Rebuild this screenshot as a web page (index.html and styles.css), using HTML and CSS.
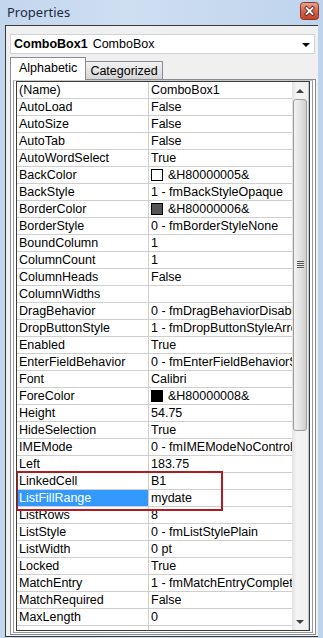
FILE: index.html
```html
<!DOCTYPE html>
<html lang="en">
<head>
    <meta charset="UTF-8">
    <title>Properties</title>
    <link rel="stylesheet" href="styles.css">
</head>
<body>
    <div class="titlebar">
        <span class="title">Properties</span>
        <span class="close">
            <svg width="19" height="18" viewBox="0 0 19 18">
                <defs>
                    <linearGradient id="cg" x1="0" y1="0" x2="0" y2="1">
                        <stop offset="0" stop-color="#eaa591"/>
                        <stop offset="0.5" stop-color="#d7644b"/>
                        <stop offset="1" stop-color="#c2432b"/>
                    </linearGradient>
                </defs>
                <rect x="0.5" y="0.5" width="18" height="17" rx="3" fill="url(#cg)" stroke="#8c3322"/>
                <path d="M6.5 6 L12.5 12 M12.5 6 L6.5 12" stroke="#5a1e14" stroke-width="3.4" stroke-linecap="square"/>
                <path d="M6.5 6 L12.5 12 M12.5 6 L6.5 12" stroke="#ffffff" stroke-width="1.8" stroke-linecap="square"/>
            </svg>
        </span>
    </div>

    <div class="panel">
        <div class="combo">
            <span class="combo-name">ComboBox1</span>
            <span class="combo-type">ComboBox</span>
            <span class="combo-arrow"></span>
        </div>

        <div class="tabs">
            <div class="tab active">Alphabetic</div>
            <div class="tab">Categorized</div>
        </div>

        <div class="tab-page">
            <div class="grid">
                <div class="grid-inner">
                    <div class="rows">
                        <div class="row"><div class="name">(Name)</div><div class="value">ComboBox1</div></div>
                        <div class="row"><div class="name">AutoLoad</div><div class="value">False</div></div>
                        <div class="row"><div class="name">AutoSize</div><div class="value">False</div></div>
                        <div class="row"><div class="name">AutoTab</div><div class="value">False</div></div>
                        <div class="row"><div class="name">AutoWordSelect</div><div class="value">True</div></div>
                        <div class="row"><div class="name">BackColor</div><div class="value"><span class="swatch swatch-white"></span>&amp;H80000005&amp;</div></div>
                        <div class="row"><div class="name">BackStyle</div><div class="value">1 - fmBackStyleOpaque</div></div>
                        <div class="row"><div class="name">BorderColor</div><div class="value"><span class="swatch swatch-gray"></span>&amp;H80000006&amp;</div></div>
                        <div class="row"><div class="name">BorderStyle</div><div class="value">0 - fmBorderStyleNone</div></div>
                        <div class="row"><div class="name">BoundColumn</div><div class="value">1</div></div>
                        <div class="row"><div class="name">ColumnCount</div><div class="value">1</div></div>
                        <div class="row"><div class="name">ColumnHeads</div><div class="value">False</div></div>
                        <div class="row"><div class="name">ColumnWidths</div><div class="value"></div></div>
                        <div class="row"><div class="name">DragBehavior</div><div class="value">0 - fmDragBehaviorDisable</div></div>
                        <div class="row"><div class="name">DropButtonStyle</div><div class="value">1 - fmDropButtonStyleArro</div></div>
                        <div class="row"><div class="name">Enabled</div><div class="value">True</div></div>
                        <div class="row"><div class="name">EnterFieldBehavior</div><div class="value">0 - fmEnterFieldBehaviorSe</div></div>
                        <div class="row"><div class="name">Font</div><div class="value">Calibri</div></div>
                        <div class="row"><div class="name">ForeColor</div><div class="value"><span class="swatch swatch-black"></span>&amp;H80000008&amp;</div></div>
                        <div class="row"><div class="name">Height</div><div class="value">54.75</div></div>
                        <div class="row"><div class="name">HideSelection</div><div class="value">True</div></div>
                        <div class="row"><div class="name">IMEMode</div><div class="value">0 - fmIMEModeNoControl</div></div>
                        <div class="row"><div class="name">Left</div><div class="value">183.75</div></div>
                        <div class="row"><div class="name">LinkedCell</div><div class="value">B1</div></div>
                        <div class="row"><div class="name selected">ListFillRange</div><div class="value">mydate</div></div>
                        <div class="row"><div class="name">ListRows</div><div class="value">8</div></div>
                        <div class="row"><div class="name">ListStyle</div><div class="value">0 - fmListStylePlain</div></div>
                        <div class="row"><div class="name">ListWidth</div><div class="value">0 pt</div></div>
                        <div class="row"><div class="name">Locked</div><div class="value">True</div></div>
                        <div class="row"><div class="name">MatchEntry</div><div class="value">1 - fmMatchEntryComplete</div></div>
                        <div class="row"><div class="name">MatchRequired</div><div class="value">False</div></div>
                        <div class="row"><div class="name">MaxLength</div><div class="value">0</div></div>
                        <div class="row"><div class="name"></div><div class="value"></div></div>

                        <!-- red frame around the linked rows -->
                        <div class="mark"></div>
                    </div>

                    <div class="scrollbar">
                        <div class="sb-btn"><span class="arrow-up"></span></div>
                        <div class="sb-track">
                            <div class="sb-thumb"><span class="grip"></span></div>
                        </div>
                        <div class="sb-btn"><span class="arrow-down"></span></div>
                    </div>
                </div>
            </div>
        </div>
    </div>
</body>
</html>
```

FILE: styles.css
```css
* {
    box-sizing: border-box;
}
html, body {
    margin: 0;
    width: 323px;
    height: 638px;
    overflow: hidden;
}
body {
    font-family: "Liberation Sans", Arial, sans-serif;
    font-size: 12.5px;
    color: #000;
    background: linear-gradient(90deg, #c2d6ee, #cfdff2 40%, #bed3ec);
    display: flex;
    flex-direction: column;
}
.titlebar {
    height: 25px;
    display: flex;
    align-items: center;
    justify-content: space-between;
    padding: 0 4px 0 7px;
}
.title {
    font-family: "Noto Sans", "Liberation Sans", sans-serif;
    font-size: 13px;
    color: #1c2b40;
    margin-top: -2px;
}
.close {
    display: flex;
    margin-top: -3px;
}
.panel {
    height: 612px;
    margin-left: 5px;
    margin-right: 5px;
    background: #f0f0f0;
    border: 1px solid #3a3a3a;
    border-right: none;
    padding: 8px 2px 1px 4px;
    display: flex;
    flex-direction: column;
    min-width: 0;
}
.combo {
    height: 20px;
    margin-right: 1px;
    background: #fff;
    border: 1px solid #d0d3d9;
    display: flex;
    align-items: center;
    padding-left: 3px;
    position: relative;
}
.combo-name {
    font-weight: bold;
    margin-right: 5px;
}
.combo-arrow {
    position: absolute;
    right: 4px;
    top: 8px;
    border-left: 4px solid transparent;
    border-right: 4px solid transparent;
    border-top: 4px solid #000;
}
.tabs {
    margin-top: 3px;
    height: 22px;
    display: flex;
    align-items: flex-end;
}
.tab {
    height: 18px;
    padding: 0 4px;
    border: 1px solid #898c95;
    border-bottom: none;
    background: linear-gradient(#f2f2f2, #d6d6d6);
    display: flex;
    align-items: center;
}
.tab.active {
    height: 23px;
    margin-bottom: -1px;
    padding: 0 8px 2px 8px;
    background: #fff;
    position: relative;
    z-index: 1;
    margin-right: -1px;
}
.tab-page {
    flex: 1;
    background: #fff;
    border: 1px solid #898c95;
    padding: 0 2px 1px 2px;
    display: flex;
    min-height: 0;
    min-width: 0;
}
.grid {
    flex: 1;
    border: 1px solid #9a9a9a;
    border-top-color: #c8c8c8;
    padding: 0 2px 1px 2px;
    display: flex;
    min-height: 0;
    min-width: 0;
}
.grid-inner {
    flex: 1;
    border: 1px solid #3c3c3c;
    display: flex;
    overflow: hidden;
    min-width: 0;
}
.rows {
    flex: 1;
    position: relative;
    overflow: hidden;
    min-width: 0;
}
.row {
    height: 17px;
    display: flex;
    border-bottom: 1px solid #cfcfcf;
}
.name {
    width: 132px;
    flex: none;
    padding-left: 2px;
    border-right: 1px solid #cfcfcf;
    line-height: 16px;
    white-space: nowrap;
    overflow: hidden;
}
.name.selected {
    background: #3399ff;
    color: #fff;
}
.value {
    flex: 1;
    min-width: 0;
    padding-left: 2px;
    line-height: 16px;
    white-space: nowrap;
    overflow: hidden;
    display: flex;
    align-items: center;
}
.swatch {
    width: 12px;
    height: 12px;
    border: 1px solid #000;
    margin-right: 5px;
    flex: none;
}
.swatch-white {
    background: #fff;
}
.swatch-gray {
    background: #555;
}
.swatch-black {
    background: #000;
}
.mark {
    position: absolute;
    left: -1px;
    top: 389px;
    width: 207px;
    height: 40px;
    border: 2px solid #b31b22;
}
.scrollbar {
    width: 17px;
    flex: none;
    background: linear-gradient(90deg, #e2e2e2, #f4f4f4 30%, #f0f0f0);
    display: flex;
    flex-direction: column;
    border-right: 1px solid #c4c4c4;
}
.sb-btn {
    height: 17px;
    display: flex;
    align-items: center;
    justify-content: center;
}
.arrow-up {
    border-left: 4px solid transparent;
    border-right: 4px solid transparent;
    border-bottom: 4px solid #404040;
}
.arrow-down {
    border-left: 4px solid transparent;
    border-right: 4px solid transparent;
    border-top: 4px solid #404040;
}
.sb-track {
    flex: 1;
}
.sb-thumb {
    height: 332px;
    margin: 0 1px;
    border: 1px solid #9c9c9c;
    border-radius: 3px;
    background: linear-gradient(90deg, #f3f3f3, #e3e3e3 50%, #cfcfcf);
    display: flex;
    align-items: center;
    justify-content: center;
}
.grip {
    width: 7px;
    height: 8px;
    background: repeating-linear-gradient(#555 0 1px, #e6e6e6 1px 2px);
}
```
